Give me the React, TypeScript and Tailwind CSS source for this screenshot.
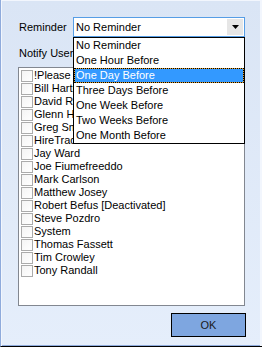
import React from "react";

const users = [
  "!Please Select",
  "Bill Hartman",
  "David Robertson",
  "Glenn Hayes",
  "Greg Smith",
  "HireTrader",
  "Jay Ward",
  "Joe Fiumefreeddo",
  "Mark Carlson",
  "Matthew Josey",
  "Robert Befus [Deactivated]",
  "Steve Pozdro",
  "System",
  "Thomas Fassett",
  "Tim Crowley",
  "Tony Randall",
];

const options = [
  "No Reminder",
  "One Hour Before",
  "One Day Before",
  "Three Days Before",
  "One Week Before",
  "Two Weeks Before",
  "One Month Before",
];

export default function App() {
  return (
    <div
      className="relative w-[262px] h-[347px] overflow-hidden border-l border-l-[#8fabdc] border-b border-b-black bg-gradient-to-b from-[#dae5f5] to-[#e5eefb] text-[11px] text-black shadow-[inset_0_1px_0_#f2f6fd,inset_1px_0_0_#f2f6fd,inset_-2px_0_0_#f2f6fd,inset_0_-1px_0_#8fabdc]"
      style={{ fontFamily: '"Liberation Sans", Arial, sans-serif' }}
    >
      <div className="flex flex-col pt-[17px] pl-[17px] pr-[17px]">
        <div className="flex items-center h-[20px]">
          <div className="w-[55px] pl-px leading-[13px]">Reminder</div>
          <div className="flex items-center w-[172px] h-[20px] border border-[#569de5] bg-white">
            <div className="flex-1 pl-[2px] leading-[13px]">No Reminder</div>
            <div className="flex items-center justify-center w-[16px] h-[16px] mr-px bg-[#e6e6e6]">
              <svg width="7" height="4" viewBox="0 0 7 4">
                <path d="M0 0H7L3.5 4Z" fill="#000" />
              </svg>
            </div>
          </div>
        </div>
        <div className="mt-[10px] h-[13px] leading-[13px] pl-px">Notify Users</div>
        <div className="mt-[7px] h-[239px] border border-[#828790] bg-white pt-px">
          {users.map((u) => (
            <div key={u} className="flex items-center h-[13px] pl-[2px] whitespace-nowrap">
              <div className="w-[12px] h-[12px] border border-[#ababab] bg-gradient-to-br from-[#f4f4f4] to-white shrink-0" />
              <span className="ml-px leading-[13px]">{u}</span>
            </div>
          ))}
        </div>
        <div className="flex justify-end mt-[7px] -mr-px">
          <button className="w-[75px] h-[24px] border border-black bg-[#7ea6e0] text-[#1a1a1a] text-[11px] leading-none">
            OK
          </button>
        </div>
      </div>

      <div className="absolute left-[72px] top-[37px] w-[172px] border border-black bg-white">
        {options.map((o) =>
          o === "One Day Before" ? (
            <div key={o} className="h-[15px] border border-dotted border-black bg-[#e0a030]">
              <div className="h-full bg-[#3399ff] text-white pl-px leading-[13px]">{o}</div>
            </div>
          ) : (
            <div key={o} className="h-[15px] pl-[2px] leading-[15px]">
              {o}
            </div>
          )
        )}
      </div>
    </div>
  );
}
